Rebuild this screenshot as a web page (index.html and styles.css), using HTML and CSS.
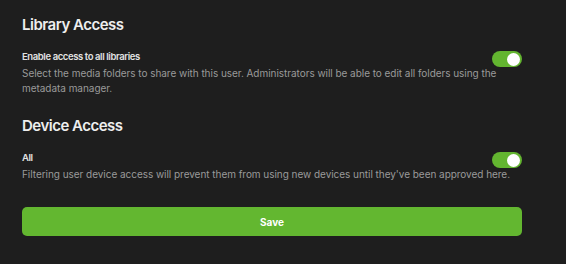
FILE: index.html
```html
<!DOCTYPE html>
<html lang="en">
<head>
    <meta charset="UTF-8">
    <meta name="viewport" content="width=device-width, initial-scale=1.0">
    <title>User Access</title>
    <link rel="stylesheet" href="styles.css">
</head>
<body>
    <div class="panel">
        <h2>Library Access</h2>
        <div class="setting-row">
            <span class="setting-label">Enable access to all libraries</span>
            <span class="toggle on"><span class="knob"></span></span>
        </div>
        <p class="setting-desc">Select the media folders to share with this user. Administrators will be able to edit all folders using the metadata manager.</p>

        <h2 class="section-gap">Device Access</h2>
        <div class="setting-row">
            <span class="setting-label">All</span>
            <span class="toggle on"><span class="knob"></span></span>
        </div>
        <p class="setting-desc">Filtering user device access will prevent them from using new devices until they've been approved here.</p>

        <button class="save-btn">Save</button>
    </div>
</body>
</html>
```

FILE: styles.css
```css
body {
    margin: 0;
    background: #1e1e1e;
    font-family: Inter, "Noto Sans", sans-serif;
    color: #ececec;
}
.panel {
    padding: 15px 44px 20px 22px;
}
h2 {
    margin: 0;
    font-size: 15px;
    line-height: 20px;
    font-weight: 600;
    letter-spacing: -0.5px;
    color: #eeeeee;
}
.section-gap {
    margin-top: 20px;
}
.setting-row {
    display: flex;
    justify-content: space-between;
    align-items: flex-start;
    margin-top: 14px;
}
.setting-label {
    font-size: 9.5px;
    line-height: 15px;
    font-weight: 600;
    letter-spacing: -0.4px;
    color: #e2e2e2;
}
.toggle {
    width: 30px;
    height: 16px;
    border-radius: 8px;
    background: #3a3a3a;
    margin-top: 2px;
    margin-bottom: -3px;
    display: flex;
    align-items: center;
    padding: 0 2px;
    box-sizing: border-box;
}
.toggle.on {
    background: #63b530;
    justify-content: flex-end;
}
.knob {
    width: 13px;
    height: 13px;
    border-radius: 50%;
    background: #ffffff;
}
.setting-desc {
    margin: 2px 0 0;
    font-size: 10px;
    line-height: 15px;
    letter-spacing: -0.04px;
    color: #9a9a9a;
}
.save-btn {
    display: block;
    width: 100%;
    height: 29px;
    margin-top: 25px;
    border: none;
    border-radius: 5px;
    background: #63b730;
    color: #ffffff;
    font-family: Inter, "Noto Sans", sans-serif;
    font-size: 10px;
    font-weight: 700;
}
```
